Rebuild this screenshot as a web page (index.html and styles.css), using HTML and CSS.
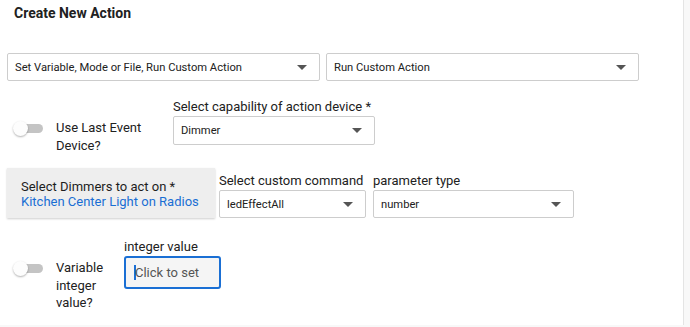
FILE: index.html
```html
<!DOCTYPE html>
<html lang="en">
<head>
    <meta charset="UTF-8">
    <meta name="viewport" content="width=device-width, initial-scale=1.0">
    <title>Create New Action</title>
    <link rel="stylesheet" href="styles.css">
</head>
<body>
    <div class="page">
        <h1 class="title">Create New Action</h1>

        <div class="row row-type">
            <div class="select select-wide">
                <span>Set Variable, Mode or File, Run Custom Action</span>
                <svg class="arrow" width="10" height="5" viewBox="0 0 10 5"><path d="M0 0h10L5 5z"/></svg>
            </div>
            <div class="select select-wide">
                <span>Run Custom Action</span>
                <svg class="arrow" width="10" height="5" viewBox="0 0 10 5"><path d="M0 0h10L5 5z"/></svg>
            </div>
        </div>

        <div class="row row-device">
            <div class="toggle-field toggle-field-device">
                <div class="toggle"><span class="knob"></span></div>
                <div class="toggle-label label-device">Use Last Event Device?</div>
            </div>
            <div class="field">
                <div class="field-label">Select capability of action device *</div>
                <div class="select select-capability">
                    <span>Dimmer</span>
                    <svg class="arrow" width="10" height="5" viewBox="0 0 10 5"><path d="M0 0h10L5 5z"/></svg>
                </div>
            </div>
        </div>

        <div class="row row-command">
            <div class="device-box">
                <div class="device-title">Select Dimmers to act on *</div>
                <div class="device-name">Kitchen Center Light on Radios</div>
            </div>
            <div class="field field-command">
                <div class="field-label">Select custom command</div>
                <div class="select select-command">
                    <span>ledEffectAll</span>
                    <svg class="arrow" width="10" height="5" viewBox="0 0 10 5"><path d="M0 0h10L5 5z"/></svg>
                </div>
            </div>
            <div class="field field-command">
                <div class="field-label">parameter type</div>
                <div class="select select-param">
                    <span>number</span>
                    <svg class="arrow" width="10" height="5" viewBox="0 0 10 5"><path d="M0 0h10L5 5z"/></svg>
                </div>
            </div>
        </div>

        <div class="row row-value">
            <div class="toggle-field toggle-field-value">
                <div class="toggle"><span class="knob"></span></div>
                <div class="toggle-label label-value">Variable integer value?</div>
            </div>
            <div class="field">
                <div class="field-label">integer value</div>
                <div class="value-input"><span class="caret"></span>Click to set</div>
            </div>
        </div>
    </div>
</body>
</html>
```

FILE: styles.css
```css
body {
    margin: 0;
    background-color: #f8f8f8;
    font-family: Roboto, "Liberation Sans", Arial, sans-serif;
    color: #212121;
}

.page {
    width: 676px;
    height: 325px;
    padding-left: 7px;
    background: #fff;
    border-right: 1px solid #e4e4e4;
}

.title {
    margin: 0;
    padding: 5px 0 0 7px;
    font-size: 14px;
    font-weight: 700;
    line-height: 16px;
}

.row {
    display: flex;
    align-items: flex-start;
}

.row-type {
    margin-top: 32px;
    gap: 6px;
}

.row-device {
    margin-top: 17px;
    height: 47px;
}

.row-command {
    margin-top: 23px;
    gap: 4px;
}

.row-value {
    margin-top: 20px;
}

.select {
    box-sizing: border-box;
    height: 28px;
    display: flex;
    align-items: center;
    justify-content: space-between;
    padding: 0 12px 0 7px;
    border: 1px solid #cdcdcd;
    border-radius: 2px;
    background: #fff;
    font-size: 11.2px;
    color: #212121;
}

.select .arrow {
    fill: #555;
    flex-shrink: 0;
}

.select-wide {
    width: 313px;
}

.select-capability {
    width: 202px;
    height: 29px;
}

.select-command {
    width: 147px;
}

.select-param {
    width: 201px;
}

.field-label {
    font-size: 13px;
    line-height: 17px;
    height: 18px;
}

.field-command {
    margin-top: 4px;
}

.field-command + .field-command {
    margin-left: 3px;
}

.toggle-field {
    display: flex;
    align-items: flex-start;
}

.toggle-field-device {
    width: 166px;
    margin-top: 21px;
}

.toggle-field-value {
    width: 117px;
    margin-top: 21px;
}

.toggle {
    position: relative;
    width: 23px;
    height: 9px;
    margin: 5px 13px 0 13px;
    border-radius: 5px;
    background: #c4c4c4;
    flex-shrink: 0;
}

.knob {
    position: absolute;
    left: -7px;
    top: -3px;
    width: 15px;
    height: 15px;
    border-radius: 50%;
    background: #fdfdfd;
    box-shadow: 0 1px 2px rgba(0, 0, 0, 0.3);
}

.toggle-label {
    font-size: 13px;
    line-height: 17.5px;
}

.label-device {
    width: 100px;
}

.label-value {
    width: 62px;
}

.device-box {
    box-sizing: border-box;
    width: 208px;
    height: 50px;
    padding: 11px 0 0 14px;
    background: #eeeeee;
    box-shadow: 0 1px 2px rgba(0, 0, 0, 0.2);
    font-size: 13px;
    line-height: 15px;
}

.device-title {
    color: #1d1d1d;
}

.device-name {
    color: #1a6fd4;
}

.value-input {
    box-sizing: border-box;
    width: 97px;
    height: 33px;
    display: flex;
    align-items: center;
    padding-left: 8px;
    border: 2px solid #1a6fd4;
    border-radius: 3px;
    background: #f5f5f5;
    font-size: 13px;
    color: #555;
}

.caret {
    width: 2px;
    height: 15px;
    margin-right: -1px;
    background: #1a6fd4;
}
```
